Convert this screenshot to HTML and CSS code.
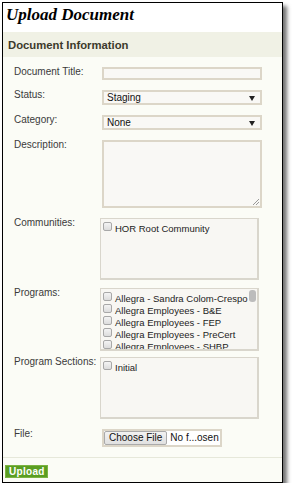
FILE: index.html
```html
<!DOCTYPE html>
<html lang="en">
<head>
    <meta charset="UTF-8">
    <title>Upload Document</title>
    <link rel="stylesheet" href="styles.css">
</head>
<body>
<div class="frame">
    <h1 class="page-title">Upload Document</h1>

    <div class="section-head">Document Information</div>

    <div class="form">
        <div class="row">
            <label class="row-label">Document Title:</label>
            <input class="field field-text" type="text">
        </div>

        <div class="row">
            <label class="row-label">Status:</label>
            <div class="field field-select">Staging</div>
        </div>

        <div class="row">
            <label class="row-label">Category:</label>
            <div class="field field-select">None</div>
        </div>

        <div class="row">
            <label class="row-label">Description:</label>
            <div class="field field-area"><span class="grip"></span></div>
        </div>

        <div class="row row-tight">
            <label class="row-label">Communities:</label>
            <div class="box">
                <ul class="check-list">
                    <li><span class="check"></span>HOR Root Community</li>
                </ul>
            </div>
        </div>

        <div class="row row-tighter">
            <label class="row-label">Programs:</label>
            <div class="box box-scroll">
                <ul class="check-list">
                    <li><span class="check"></span>Allegra - Sandra Colom-Crespo</li>
                    <li><span class="check"></span>Allegra Employees - B&amp;E</li>
                    <li><span class="check"></span>Allegra Employees - FEP</li>
                    <li><span class="check"></span>Allegra Employees - PreCert</li>
                    <li><span class="check"></span>Allegra Employees - SHBP</li>
                </ul>
                <div class="scroll-track"><span class="scroll-thumb"></span></div>
            </div>
        </div>

        <div class="row">
            <label class="row-label">Program Sections:</label>
            <div class="box">
                <ul class="check-list">
                    <li><span class="check"></span>Initial</li>
                </ul>
            </div>
        </div>

        <div class="row">
            <label class="row-label">File:</label>
            <div class="file-pick">
                <span class="file-btn">Choose File</span>
                <span class="file-name">No f...osen</span>
            </div>
        </div>
    </div>

    <div class="actions">
        <span class="btn-upload">Upload</span>
    </div>
</div>
</body>
</html>
```

FILE: styles.css
```css
* {
    box-sizing: border-box;
}

body {
    margin: 0;
    background: #fff;
    font-family: "Liberation Sans", Arial, sans-serif;
}

.frame {
    margin: 2px 0 0 2px;
    width: 281px;
    height: 481px;
    border: 1px solid #000;
    background: #fbfcf6;
    box-shadow: 4px 4px 4px rgba(0, 0, 0, .55);
}

.page-title {
    margin: 0;
    height: 29px;
    padding: 3px 0 0 3px;
    background: #fff;
    font-family: "Liberation Serif", "Times New Roman", serif;
    font-style: italic;
    font-weight: bold;
    font-size: 17px;
    line-height: 18px;
    color: #000;
}

.section-head {
    height: 25px;
    padding: 1px 0 0 5px;
    background: #f0f1e5;
    font-size: 11.3px;
    font-weight: bold;
    line-height: 24px;
    color: #3c3a2c;
}

.form {
    padding: 10px 0 0 11px;
}

.row {
    display: grid;
    grid-template-columns: 88px 160px;
    margin-bottom: 10px;
}

.row-tight {
    margin-bottom: 8px;
}

.row-tighter {
    margin-bottom: 6px;
}

.row-label {
    font-size: 10px;
    line-height: 12px;
    margin-top: -1px;
    color: #3a3a3a;
}

.field {
    display: block;
    width: 160px;
    border: 2px solid #dcd6c8;
    background: #f9f8f5;
    font-family: "Liberation Sans", Arial, sans-serif;
    font-size: 10px;
    color: #111;
}

.field-text {
    height: 13px;
    padding: 0;
    margin: 0;
    outline: none;
}

.field-select {
    position: relative;
    height: 15px;
    padding: 0 0 0 3px;
    line-height: 12px;
}

.field-select::after {
    content: "";
    position: absolute;
    right: 5px;
    top: 4px;
    border-left: 3px solid transparent;
    border-right: 3px solid transparent;
    border-top: 5px solid #222;
}

.field-area {
    position: relative;
    height: 68px;
}

.grip {
    position: absolute;
    right: 1px;
    bottom: 1px;
    width: 6px;
    height: 6px;
    background: linear-gradient(135deg, transparent 45%, #999 45%, #999 55%, transparent 55%, transparent 70%, #999 70%, #999 80%, transparent 80%);
}

.box {
    display: flex;
    width: 159px;
    height: 62px;
    margin-left: -2px;
    border: 1px solid #d9d6cc;
    border-right-width: 2px;
    border-bottom-width: 2px;
    background: #f8f7f3;
    overflow: hidden;
}

.box-scroll {
    height: 63px;
}

.check-list {
    flex: 1;
    list-style: none;
    margin: 0;
    padding: 3px 0 0 2px;
    overflow: hidden;
}

.check-list li {
    display: flex;
    align-items: center;
    height: 12px;
    font-size: 9.5px;
    color: #1c1c1c;
    white-space: nowrap;
}

.check {
    flex: none;
    width: 9px;
    height: 9px;
    margin: -3px 3px 0 0;
    border: 1px solid #a8a8a8;
    border-radius: 2px;
    background: linear-gradient(#f4f4f4, #dcdcdc);
}

.scroll-track {
    flex: none;
    width: 8px;
    padding: 1px 1px 0 0;
}

.scroll-thumb {
    display: block;
    height: 12px;
    border-radius: 3px;
    background: #bcbcbc;
}

.file-pick {
    display: flex;
    width: 120px;
    height: 18px;
    border: 2px solid #dcd6c8;
    background: #fff;
    font-size: 10px;
}

.file-btn {
    padding: 0 4px;
    line-height: 12px;
    border: 1px solid #aaa;
    border-radius: 2px;
    background: linear-gradient(#f2f2f2, #e0e0e0);
    color: #111;
}

.file-name {
    padding-left: 3px;
    line-height: 14px;
    color: #111;
}

.actions {
    margin-top: 10px;
    padding: 3px 0 0 2px;
    border-top: 1px solid #e6e8da;
}

.btn-upload {
    display: inline-block;
    width: 43px;
    height: 13px;
    padding-left: 3px;
    border: 1px solid #7cb342;
    background: #5a9e22;
    color: #fff;
    font-size: 10px;
    font-weight: bold;
    line-height: 11px;
    letter-spacing: .3px;
}
```
